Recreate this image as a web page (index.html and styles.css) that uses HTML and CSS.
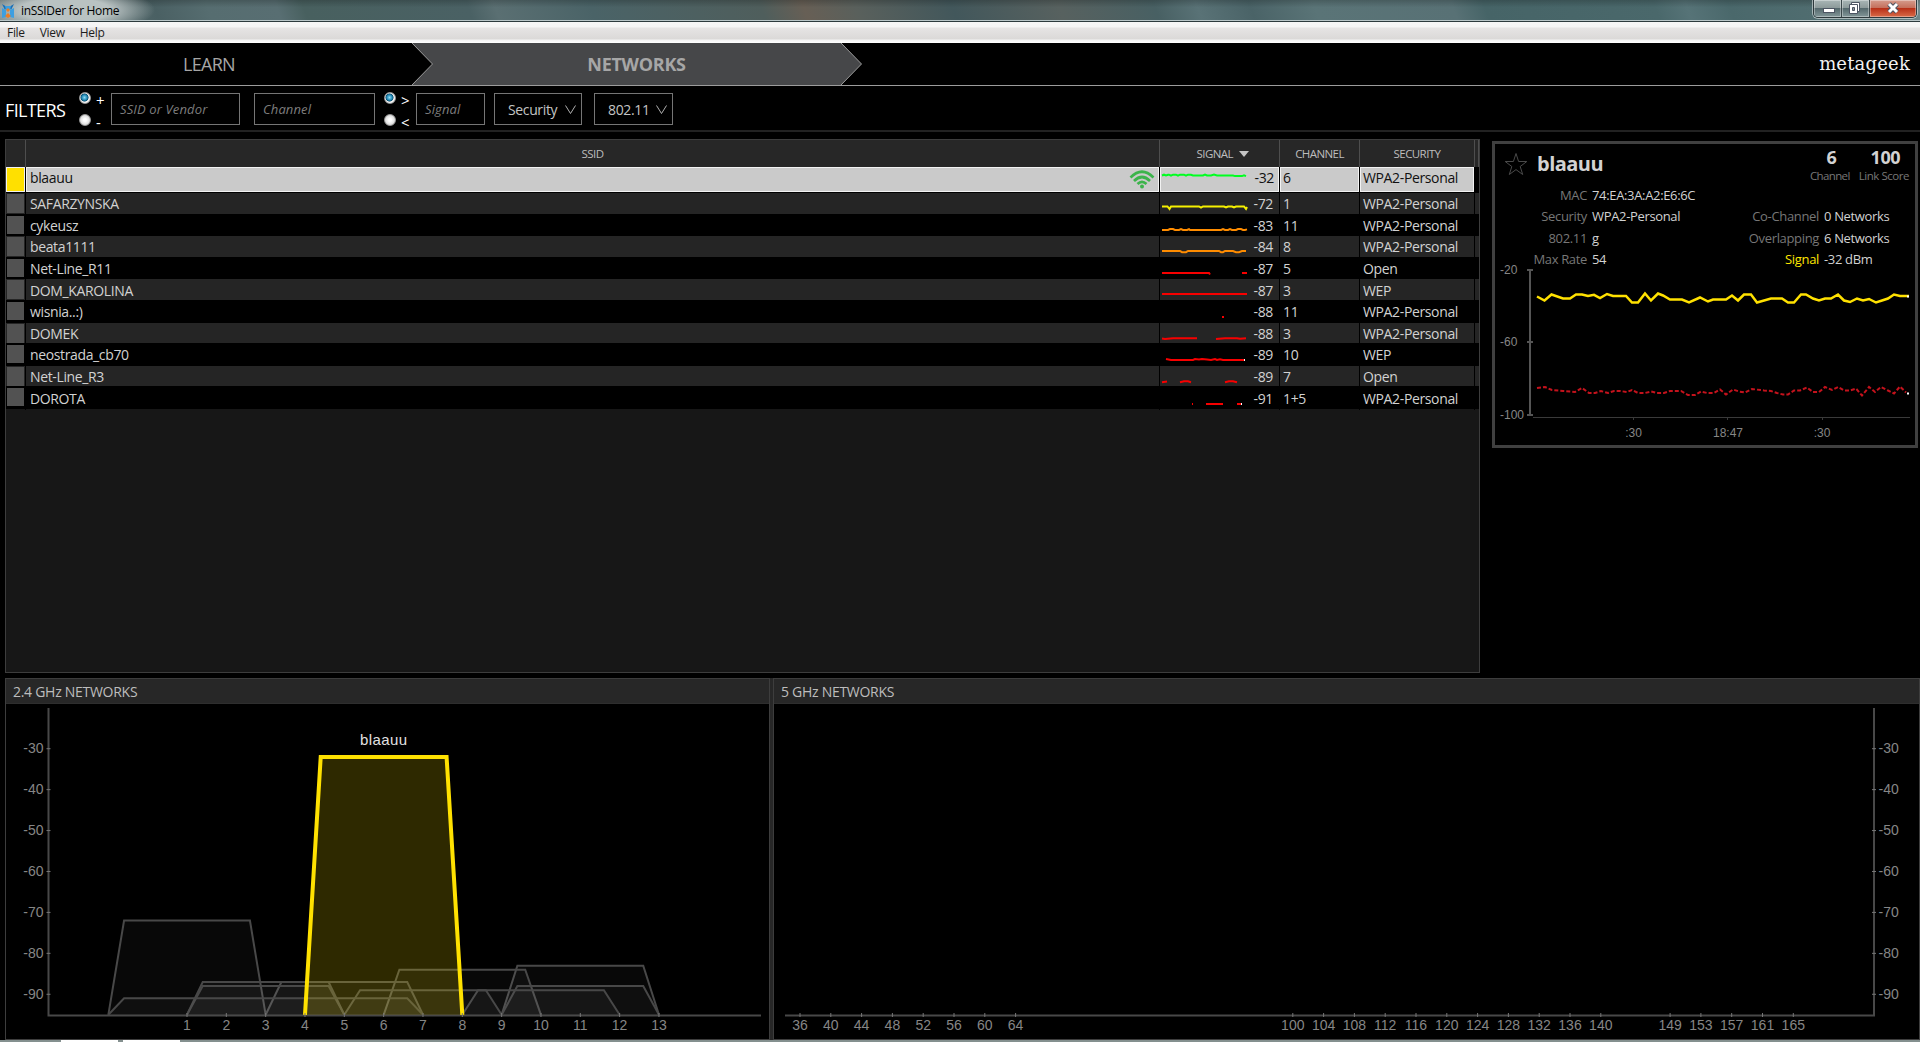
FILE: index.html
```
<!DOCTYPE html>
<html lang="en">
  <head>
    <meta charset="UTF-8" />
    <title>inSSIDer for Home</title>
    <link rel="stylesheet" href="styles.css">
  </head>
  <body>
    <header class="titlebar">
      <svg class="app-icon" width="14" height="16" viewBox="0 0 14 16">
        <path d="M1 1l5 3-2 3zM13 1L8 4l2 3z" fill="#1c6fb5" />
        <path d="M1 5l4 2v7l-4 1zM13 5L9 7v7l4 1zM4 3h6l-1 4H5z" fill="#3d9fe0" />
        <path d="M7 5l2 2-2 2-2-2zM7 10l3 3-3 2-3-2z" fill="#ee7d22" />
      </svg>
      <span class="app-title">inSSIDer for Home</span>
      <div class="window-buttons">
        <span class="win-btn minimize">
          <svg width="27" height="17"><rect x="9.5" y="8.5" width="11" height="4" fill="#fff" stroke="#4d5563" /></svg>
        </span>
        <span class="win-btn restore">
          <svg width="27" height="17">
            <path d="M9.500 2.500h8v9h-8z" fill="#fff" stroke="#4d5563" />
            <path d="M7.500 4.500h8v9h-8z" fill="#fff" stroke="#4d5563" />
            <path d="M10.500 7.500h2v3h-2z" fill="#8c969b" stroke="#4d5563" />
          </svg>
        </span>
        <span class="win-btn close">
          <svg width="46" height="17">
            <path d="M19 4l8 8M27 4l-8 8" stroke="#4d5563" stroke-width="5" />
            <path d="M19 4l8 8M27 4l-8 8" stroke="#fff" stroke-width="3" />
          </svg>
        </span>
      </div>
    </header>

    <nav class="menubar">
      <span>File</span>
      <span>View</span>
      <span>Help</span>
    </nav>

    <nav class="tabs">
      <a class="tab learn">LEARN</a>
      <a class="tab networks">NETWORKS</a>
      <svg class="tab-edges" width="870" height="42">
        <path d="M412 0l20.500 21L412 42H841l20.500-21L841 0z" fill="#464749" />
        <path d="M412 0l20.500 21L412 42M841 0l20.500 21L841 42" fill="none" stroke="#9c9c9c" />
      </svg>
      <span class="brand">metageek</span>
    </nav>

    <section class="filters">
      <h1>FILTERS</h1>
      <div class="radios ssid-radios">
        <label><i class="radio on"></i>+</label>
        <label><i class="radio"></i>-</label>
      </div>
      <div class="field ssid-field">SSID or Vendor</div>
      <div class="field channel-field">Channel</div>
      <div class="radios signal-radios">
        <label><i class="radio on"></i>&gt;</label>
        <label><i class="radio"></i>&lt;</label>
      </div>
      <div class="field signal-field">Signal</div>
      <div class="select security-select">Security
        <svg width="11" height="9"><path d="M.5.500l5 8 5-8" /></svg>
      </div>
      <div class="select mode-select">802.11
        <svg width="11" height="9"><path d="M.5.500l5 8 5-8" /></svg>
      </div>
    </section>

    <main class="workspace">
      <section class="table">
        <div class="row head">
          <span></span>
          <span>SSID</span>
          <span class="sorted">SIGNAL <i class="sort-arrow"></i></span>
          <span>CHANNEL</span>
          <span>SECURITY</span>
          <span></span>
        </div>
        <div class="row selected">
          <span class="swatch"><i></i></span>
          <span class="ssid">blaauu
            <svg class="wifi" width="26" height="19" viewBox="0 0 26 19">
              <g fill="none" stroke="#3cb44b" stroke-width="2.600">
                <path d="M1.500 7.500q11.500-11.500 23 0" />
                <path d="M5 11q8-8 16 0" />
                <path d="M8.500 14q4.500-4.500 9 0" />
              </g>
              <circle cx="13" cy="16.500" r="2" fill="#3cb44b" />
            </svg>
          </span>
          <span class="signal">
            <svg class="spark green" width="90" height="21"><path d="M1 7.500l2-.8 2 .8 2-.8h1l2 1 2-1h3l2 1 2-1h4l2 1 2-1h3l2 .8h10l2-1 2 1h4l3-1 3 1h16l2 .6h7l2-.8 2 .8" /></svg>-32
          </span>
          <span>6</span>
          <span>WPA2-Personal</span>
          <span class="end"></span>
        </div>
        <div class="row stripe">
          <span class="swatch"><i></i></span><span>SAFARZYNSKA</span>
          <span class="signal"><svg class="spark yellow" width="90" height="21"><path d="M2 13.500h5.500l2 2.500 1.500-2.500h28l2 1.200 2-1.200h21l2 1 2-1h4l2 1 2-1h8l2 2.500 1-2" /></svg>-72</span>
          <span>1</span><span>WPA2-Personal</span><span class="end"></span>
        </div>
        <div class="row">
          <span class="swatch"><i></i></span><span>cykeusz</span>
          <span class="signal"><svg class="spark orange" width="90" height="21"><path d="M2 15h6l2-1h3l2 1h4l2-1 2 1h4l2-.8 1 .8h31l2-1 2 1h3l2-1 2 1h4l2-1h3l2 1h2l2-.6" /></svg>-83</span>
          <span>11</span><span>WPA2-Personal</span><span class="end"></span>
        </div>
        <div class="row stripe">
          <span class="swatch"><i></i></span><span>beata1111</span>
          <span class="signal"><svg class="spark orange" width="90" height="21"><path d="M2 15h18l2 1.200h4l2-1.200h31l2 1.200h2l2-1.200h8l3 1.200h3l3-1.200h4" /></svg>-84</span>
          <span>8</span><span>WPA2-Personal</span><span class="end"></span>
        </div>
        <div class="row">
          <span class="swatch"><i></i></span><span>Net-Line_R11</span>
          <span class="signal"><svg class="spark red" width="90" height="21"><path d="M2 15h47l1 1.500M82 15h5" /></svg>-87</span>
          <span>5</span><span>Open</span><span class="end"></span>
        </div>
        <div class="row stripe low">
          <span class="swatch"><i></i></span><span>DOM_KAROLINA</span>
          <span class="signal"><svg class="spark red" width="90" height="21"><path d="M2 15h85" /></svg>-87</span>
          <span>3</span><span>WEP</span><span class="end"></span>
        </div>
        <div class="row">
          <span class="swatch"><i></i></span><span>wisnia..:)</span>
          <span class="signal"><svg class="spark red" width="90" height="21"><path d="M62 16h2" /></svg>-88</span>
          <span>11</span><span>WPA2-Personal</span><span class="end"></span>
        </div>
        <div class="row stripe">
          <span class="swatch"><i></i></span><span>DOMEK</span>
          <span class="signal"><svg class="spark red" width="90" height="21"><path d="M2 15.500l3 .5 8-.8h24M56 16l9-.8h12l3 .6 6-.6" /></svg>-88</span>
          <span>3</span><span>WPA2-Personal</span><span class="end"></span>
        </div>
        <div class="row">
          <span class="swatch"><i></i></span><span>neostrada_cb70</span>
          <span class="signal"><svg class="spark red" width="90" height="21"><path d="M6 15l5 1h22l2-1 4 .5 3-.5 5 .5 4 .5 4-1 2 1 3-.7 3 .7h21" /><path class="tip" d="M84 16h1" /></svg>-89</span>
          <span>10</span><span>WEP</span><span class="end"></span>
        </div>
        <div class="row stripe">
          <span class="swatch"><i></i></span><span>Net-Line_R3</span>
          <span class="signal"><svg class="spark red" width="90" height="21"><path d="M2 16.300l5-.8M20 16.200l4-.9h4l3 .9M65 16.200l4-.9h4l4 .9" /></svg>-89</span>
          <span>7</span><span>Open</span><span class="end"></span>
        </div>
        <div class="row low">
          <span class="swatch"><i></i></span><span>DOROTA</span>
          <span class="signal"><svg class="spark red" width="90" height="21"><path d="M32 17h1M46 17h17M77 17h4" /><path class="tip" d="M81 17h1" /></svg>-91</span>
          <span>1+5</span><span>WPA2-Personal</span><span class="end"></span>
        </div>
      </section>

      <aside class="details">
        <div class="details-head">
          <svg class="star" width="24" height="24" viewBox="0 0 24 24">
            <path d="M12 1.500l2.600 8h8.200l-6.600 5 2.500 8-6.700-4.900-6.700 4.900 2.500-8-6.600-5h8.200z" fill="none" stroke="#4a4a4a" />
          </svg>
          <h2>blaauu</h2>
          <div class="score"><b>6</b>Channel</div>
          <div class="score link-score"><b>100</b>Link Score</div>
        </div>
        <div class="facts">
          <span class="key">MAC</span><span>74:EA:3A:A2:E6:6C</span><span></span><span></span>
          <span class="key">Security</span><span>WPA2-Personal</span><span class="key">Co-Channel</span><span>0 Networks</span>
          <span class="key">802.11</span><span>g</span><span class="key">Overlapping</span><span>6 Networks</span>
          <span class="key">Max Rate</span><span>54</span><span class="key hot">Signal</span><span>-32 dBm</span>
        </div>
        <svg class="history" width="420" height="173" viewBox="1495 272 420 173">
          <path d="M1530 270v146M1527 270h6M1527 342h6M1527 415h6" stroke="#555" stroke-width="2" />
          <path d="M1533 417.500h377M1633.500 417v3M1727.500 417v3M1822.500 417v3" stroke="#3a3a3a" />
          <g class="axis-text small">
            <text x="1500" y="274">-20</text>
            <text x="1500" y="346">-60</text>
            <text x="1500" y="419">-100</text>
            <text x="1633.500" y="437" text-anchor="middle">:30</text>
            <text x="1728" y="437" text-anchor="middle">18:47</text>
            <text x="1822" y="437" text-anchor="middle">:30</text>
          </g>
          <path class="trace" d="M1537 296.500l7.500 4 7-6 11.500 4h7l6-4h6l6 1.500 6-1.200 6 3.200 7-4 6 2h13l6 6.500h6l7-9 6 7 7-7 5 2 7 4h12l7 3 11-5 8 4 5-2h13l6-4 6 5 6-6h7l6 8 14-4h11l6 4h6l7-8h5l7 4 6 2 6-2h6l7-4 6 6 6 1.500 7-3.500 6 2 6-1.500 7 3.500 6-2 6-2 6-4 6 1.500h9" />
          <path class="noise" d="M1537 388l8-1 7 3 11 1 12 1 7-4 7 5h6l6-2 7 2 6-2h6l7 1 5-2 6 3h7l6-1.500 6 1.500h7l6-2h11l7 4h7l6-3.500 6 1.500h7l6-3.500 6 5 7-5 6 2 6 1 7-3.500 12 1.500 7 .5 6 2 6 1.500h5l6-4h6l7-3 6 4.500h6l6-5 7 3 6-3 6 3.500h6l6-2 6 7 7-8.500 6 5 6-5 7 3.500 6 3 6-7 6 6" />
          <path d="M1907 296.500h2M1907 393.500h2" stroke="#fff" stroke-width="2" />
        </svg>
      </aside>
    </main>

    <section class="bands">
      <div class="band">
        <h3>2.4 GHz NETWORKS</h3>
        <svg id="chart24" width="763" height="335" viewBox="6 704 763 335"></svg>
      </div>
      <div class="splitter"></div>
      <div class="band band5">
        <h3>5 GHz NETWORKS</h3>
        <svg id="chart5" width="1145" height="335" viewBox="774 704 1145 335"></svg>
      </div>
    </section>
    <footer class="taskbar"><i></i><i></i></footer>

    <script src="charts.js"></script>
  </body>
</html>
```
FILE: styles.css
```
* {
  box-sizing: border-box;
  letter-spacing: -0.026em;
}
body {
  margin: 0;
  height: 1042px;
  overflow: hidden;
  background: #000;
  color: #d2d2d2;
  font-family: "Open Sans", "Noto Sans", sans-serif;
  font-size: 14px;
}
h1,
h2,
h3 {
  margin: 0;
  font-weight: normal;
}
svg {
  display: block;
  flex: none;
}

/* window frame */
.titlebar {
  display: flex;
  height: 22px;
  padding-left: 1px;
  border-bottom: 1px solid #2c3a3d;
  box-shadow: inset 0 -1px #b9c6c8;
  background:
    radial-gradient(ellipse 90px 24px at 65px 10px, #b9c2c2 50%, rgba(160, 175, 175, 0) 100%),
    linear-gradient(rgba(0, 0, 0, 0.2), rgba(0, 0, 0, 0) 35%),
    linear-gradient(70deg, #6d7c7d 0, #4a6063 150px, #566d70 200px, #586e72 265px, #48605f 290px, #4a6164 445px, #5a6f72 470px, #4a6367 560px, #4f5e5c 720px, #675f55 760px, #59605c 810px, #42575b 900px, #57615f 1000px, #486063 1090px, #597276 1130px, #4a6367 1180px, #5a7477 1240px, #587175 1370px, #466467 1400px, #4a686b 1560px, #567377 1590px, #4a686b 1630px, #557174 1780px, #8a9fa1 1830px, #7c9294 100%);
}
.app-icon {
  margin-top: 3px;
}
.app-title {
  margin-left: 6px;
  color: #000;
  font-size: 12px;
  line-height: 22px;
}
.window-buttons {
  display: flex;
  height: 18px;
  margin: 0 3px 0 auto;
  border: 1px solid #2d393c;
  border-top: 0;
  border-radius: 0 0 5px 5px;
  overflow: hidden;
  box-shadow: 0 0 0 1px rgba(255, 255, 255, 0.5);
}
.win-btn {
  background: linear-gradient(#a9b6b6 0, #8d9b9b 45%, #52666a 46%, #829698 100%);
  border-right: 1px solid #3a474a;
  box-shadow: inset 0 0 0 1px rgba(255, 255, 255, 0.35);
}
.close {
  border: 0;
  background: linear-gradient(#d59c8d 0, #c5705c 45%, #b62c14 46%, #d96b48 100%);
}
.menubar {
  display: flex;
  height: 21px;
  padding-left: 7px;
  gap: 15px;
  color: #1c1c1c;
  font-size: 12px;
  line-height: 22px;
  background: linear-gradient(#f6f6f6 0, #f4f4f4 5px, #e6e4e4 6px, #dbd9d8 17px, #f4f4f4 18px, #fff 100%);
}

/* LEARN / NETWORKS */
.tabs {
  position: relative;
  display: flex;
  height: 43px;
  border-bottom: 1px solid #9c9c9c;
  font-size: 18px;
  line-height: 43px;
}
.tab {
  position: relative;
  z-index: 1;
  width: 418px;
  text-align: center;
  color: #a6a6a6;
  letter-spacing: -0.04em;
}
.networks {
  width: 437px;
  font-weight: bold;
  letter-spacing: -0.015em;
}
.tab-edges {
  position: absolute;
  left: 0;
  top: 0;
}
.brand {
  margin: 0 10px 0 auto;
  color: #f2f2f2;
  font-family: "DejaVu Serif", serif;
  font-weight: 200;
  font-size: 18px;
  line-height: 41px;
  letter-spacing: 0.01em;
}

/* filter bar */
.filters {
  display: flex;
  height: 46px;
  padding: 7px 0 0 5px;
  border-bottom: 2px solid #222;
}
.filters h1 {
  width: 74px;
  color: #fff;
  font-size: 18px;
  line-height: 35px;
  letter-spacing: -0.035em;
}
.radios {
  display: flex;
  flex: none;
  flex-direction: column;
  gap: 9px;
  width: 32px;
  margin-top: -1px;
}
.signal-radios {
  width: 38px;
  margin-left: 9px;
}
.radios label {
  display: flex;
  gap: 5px;
  height: 13px;
  color: #fff;
  font-size: 15px;
  line-height: 16px;
}
.radio {
  width: 12px;
  height: 12px;
  border-radius: 50%;
  border: 1px solid #999;
  background: radial-gradient(circle, #fff 20%, #c4c4c4 100%);
}
.on {
  background: radial-gradient(circle at 45% 45%, #8fdcf5 0, #1b86b4 35%, #12506e 48%, #f4f4f4 56%);
}
.field,
.select {
  height: 32px;
  border: 1px solid #757575;
  line-height: 31px;
}
.field {
  padding-left: 8px;
  color: #7d7d7d;
  font-size: 13px;
  font-style: italic;
  letter-spacing: 0.01em;
}
.ssid-field {
  width: 129px;
}
.channel-field {
  width: 121px;
  margin-left: 14px;
}
.signal-field {
  width: 69px;
  margin-left: -6px;
}
.select {
  display: flex;
  align-items: center;
  justify-content: space-between;
  padding: 0 5px 0 13px;
  color: #c4c4c4;
}
.select path {
  fill: none;
  stroke: #b0b0b0;
}
.security-select {
  width: 88px;
  margin-left: 9px;
}
.mode-select {
  width: 79px;
  margin-left: 12px;
}

/* network table */
.workspace {
  display: flex;
  height: 546px;
  padding: 7px 2px 5px 5px;
}
.table {
  width: 1475px;
  height: 534px;
  border: 1px solid #3d3d3d;
  background: #171717;
}
.row {
  display: grid;
  grid-template-columns: 20px 1134px 120px 80px 115px 1fr;
  height: 21.6px;
  background: #000;
  line-height: 21px;
}
.row > span {
  padding-left: 3px;
  border-right: 1px solid #000;
}
.row > span:nth-child(2) {
  padding-left: 4px;
}
.row > .end {
  border: 0;
}
.stripe {
  background: #252525;
  border-bottom: 1px solid #000;
}
/* baseline rounds up a pixel in these rows */
.low {
  line-height: 23px;
}
.head {
  height: 27px;
  background: #272727;
  color: #bdbdbd;
  font-size: 11.5px;
  line-height: 27px;
}
.head > span,
.head > span:nth-child(2) {
  padding: 0;
  border-right: 1px solid #4e4e4e;
  text-align: center;
  letter-spacing: -0.05em;
}
.head > .sorted {
  padding-left: 7px;
}
.sort-arrow {
  display: inline-block;
  margin: 0 0 1px 4px;
  border: 5px solid transparent;
  border-top: 6px solid #c4c4c4;
  border-bottom: 0;
}
.row > .swatch {
  padding: 1px;
}
.swatch i {
  display: block;
  width: 17px;
  height: 18px;
  background: #525252;
}
.stripe .swatch i {
  height: 19px;
}
.selected {
  height: 26px;
  padding-bottom: 1px;
  color: #111;
  line-height: 20px;
}
.selected > span {
  border: 1px solid #f2f2f2;
  background: #cacaca;
  margin-right: 1px;
  padding-left: 2px;
}
.row.selected > .ssid {
  padding-left: 3px;
}
.selected > .swatch {
  padding: 0;
}
.selected .swatch i {
  width: 100%;
  height: 100%;
  background: #ffe000;
}
.selected > .end {
  border: 0;
  background: #000;
}
.ssid,
.signal {
  display: flex;
  justify-content: space-between;
}
.wifi {
  margin: 2px 3px 0 0;
}
.row > .signal {
  padding: 0 6px 0 0;
}
.row.selected > .signal {
  padding-right: 4px;
}
.spark {
  fill: none;
  stroke-width: 2;
}
.green {
  stroke: #00ff21;
}
.yellow {
  stroke: #f5f000;
}
.orange {
  stroke: #ff8c00;
}
.red {
  stroke: #f80000;
}
.tip {
  stroke: #fff;
}

/* selected network card */
.details {
  width: 426px;
  height: 307px;
  margin: 2px 0 0 auto;
  border: 3px solid #404040;
}
.details-head {
  display: flex;
  height: 41px;
  padding: 7px 6px 0 9px;
}
.star {
  margin-top: 1px;
}
.details h2 {
  margin: 1px auto 0 9px;
  font-size: 20px;
  font-weight: bold;
  line-height: 24px;
}
.score {
  margin-top: -4px;
  color: #777;
  font-size: 11.5px;
  line-height: 16px;
  text-align: center;
  letter-spacing: -0.055em;
}
.score b {
  display: block;
  padding-left: 3px;
  color: #d2d2d2;
  font-size: 18px;
  line-height: 21px;
}
.link-score {
  margin-left: 9px;
  letter-spacing: -0.04em;
}
.facts {
  display: grid;
  grid-template-columns: 92px 130px 92px 1fr;
  grid-auto-rows: 21.400px;
  column-gap: 5px;
  height: 87px;
  font-size: 13px;
  line-height: 21px;
}
.key {
  color: #777;
  text-align: right;
}
.hot {
  color: #ffe600;
}
.history {
  overflow: visible;
}
.trace {
  fill: none;
  stroke: #ffe100;
  stroke-width: 2.500;
}
.noise {
  fill: none;
  stroke: #c4121c;
  stroke-width: 2;
  stroke-dasharray: 4 2;
}
.axis-text,
.axis-text text {
  fill: #868686;
  font-family: "Liberation Sans", Arial, sans-serif;
  font-size: 14px;
  letter-spacing: 0;
}
.axis-text.small text {
  font-size: 12px;
}

/* channel charts */
.bands {
  display: flex;
  height: 362px;
  padding-left: 5px;
}
.band {
  width: 765px;
  border: 1px solid #3d3d3d;
  overflow: hidden;
}
.band5 {
  width: 1147px;
}
.band h3 {
  height: 25px;
  padding-left: 7px;
  border-bottom: 1px solid #2e2e2e;
  background: #272727;
  color: #bdbdbd;
  font-size: 14px;
  line-height: 26px;
  letter-spacing: -0.02em;
}
.splitter {
  width: 3px;
  background: #272727;
}
.axis {
  fill: none;
  stroke: #484848;
  stroke-width: 2;
}
.tick {
  stroke: #777;
}
.shape {
  fill: rgba(255, 255, 255, 0.03);
  stroke: #484848;
  stroke-width: 2;
}
.shape.active {
  fill: rgba(255, 225, 0, 0.18);
  stroke: #ffe100;
  stroke-width: 4;
}
.axis-text .shape-label {
  fill: #e2e2e2;
  font-size: 15px;
}
.taskbar {
  display: flex;
  gap: 5px;
  height: 2px;
  padding-left: 61px;
  background: #84908f;
}
.taskbar i {
  width: 57px;
  background: #fff;
}
```
FILE: charts.js
```
const FLOOR = 1014.8;

// dBm -> y
function level(dbm) {
  return 748.7 + (-30 - dbm) * 4.093;
}

// 2.4 GHz channel -> x
function chan24(c) {
  return 187 + (c - 1) * 39.33;
}

// 5 GHz channel -> x
function chan5(c) {
  return 800 + (c - 36) * 7.7;
}

function shape(from, to, dbm, cls) {
  const y = level(dbm);
  return `<path class="shape ${cls || ""}" d="M${chan24(from)} ${FLOOR}L${chan24(from + 0.4)} ${y}H${chan24(to - 0.4)}L${chan24(to)} ${FLOOR}" />`;
}

function levels(axisX, textX, anchor) {
  let out = "";
  for (let v = -30; v >= -90; v -= 10) {
    out += `<path class="tick" d="M${axisX - 2} ${level(v)}h4" />`;
    out += `<text x="${textX}" y="${level(v) + 4.6}" text-anchor="${anchor}">${v}</text>`;
  }
  return out;
}

function channels(list, toX) {
  return list
    .map((c) => `<path class="tick" d="M${toX(c)} 1013v4" /><text x="${toX(c)}" y="1030" text-anchor="middle">${c}</text>`)
    .join("");
}

const networks = [
  [-1, 3, -72],
  [9, 13, -83],
  [6, 10, -84],
  [3, 7, -87],
  [1, 5, -87],
  [9, 13, -88],
  [1, 5, -88],
  [8, 12, -89],
  [5, 9, -89],
  [-1, 7, -91],
];

document.getElementById("chart24").innerHTML =
  '<path class="axis" d="M48.500 708V1015.500H761" />' +
  networks.map((n) => shape(n[0], n[1], n[2])).join("") +
  shape(4, 8, -32, "active") +
  '<g class="axis-text">' +
  levels(48.5, 43.5, "end") +
  channels([1, 2, 3, 4, 5, 6, 7, 8, 9, 10, 11, 12, 13], chan24) +
  '<text class="shape-label" x="383.500" y="745" text-anchor="middle" textLength="47">blaauu</text></g>';

document.getElementById("chart5").innerHTML =
  '<path class="axis" d="M785 1015.500H1874V708" />' +
  '<g class="axis-text">' +
  levels(1874, 1878.5, "start") +
  channels([36, 40, 44, 48, 52, 56, 60, 64, 100, 104, 108, 112, 116, 120, 124, 128, 132, 136, 140, 149, 153, 157, 161, 165], chan5) +
  "</g>";
```
